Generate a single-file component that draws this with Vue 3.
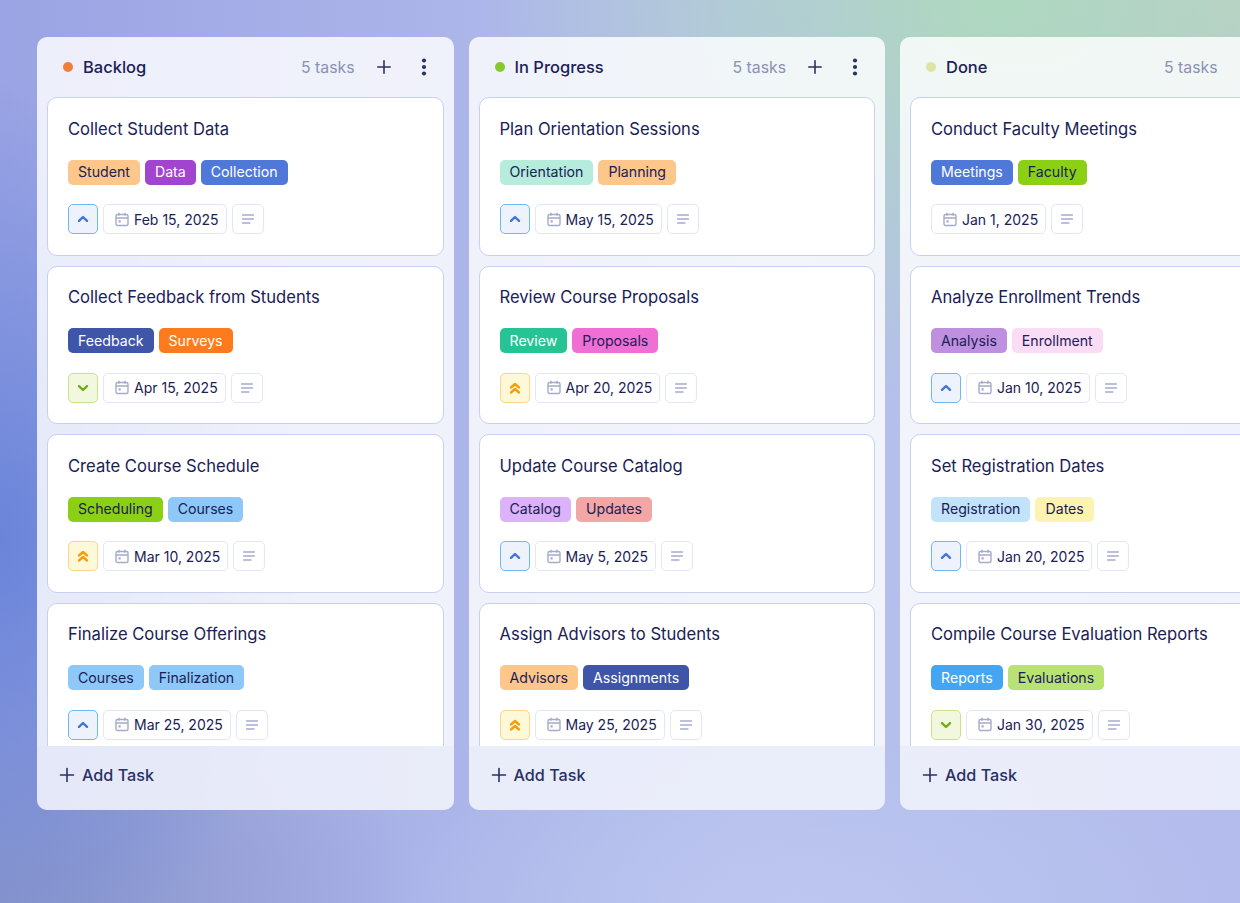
<script setup>
const columns = [
  {
    name: 'Backlog',
    dot: '#f08039',
    cards: [
      { title: 'Collect Student Data', tags: [['Student', 'orange'], ['Data', 'purple'], ['Collection', 'blue']], priority: 'medium', date: 'Feb 15, 2025' },
      { title: 'Collect Feedback from Students', tags: [['Feedback', 'navy'], ['Surveys', 'tangerine']], priority: 'low', date: 'Apr 15, 2025' },
      { title: 'Create Course Schedule', tags: [['Scheduling', 'green'], ['Courses', 'sky']], priority: 'high', date: 'Mar 10, 2025' },
      { title: 'Finalize Course Offerings', tags: [['Courses', 'sky'], ['Finalization', 'sky']], priority: 'medium', date: 'Mar 25, 2025' }
    ]
  },
  {
    name: 'In Progress',
    dot: '#86c92a',
    cards: [
      { title: 'Plan Orientation Sessions', tags: [['Orientation', 'mint'], ['Planning', 'orange']], priority: 'medium', date: 'May 15, 2025' },
      { title: 'Review Course Proposals', tags: [['Review', 'teal'], ['Proposals', 'pink']], priority: 'high', date: 'Apr 20, 2025' },
      { title: 'Update Course Catalog', tags: [['Catalog', 'lilac'], ['Updates', 'rose']], priority: 'medium', date: 'May 5, 2025' },
      { title: 'Assign Advisors to Students', tags: [['Advisors', 'orange'], ['Assignments', 'navy']], priority: 'high', date: 'May 25, 2025' }
    ]
  },
  {
    name: 'Done',
    dot: '#dfe3a6',
    cards: [
      { title: 'Conduct Faculty Meetings', tags: [['Meetings', 'blue'], ['Faculty', 'green']], priority: null, date: 'Jan 1, 2025' },
      { title: 'Analyze Enrollment Trends', tags: [['Analysis', 'violet'], ['Enrollment', 'blush']], priority: 'medium', date: 'Jan 10, 2025' },
      { title: 'Set Registration Dates', tags: [['Registration', 'ice'], ['Dates', 'cream']], priority: 'medium', date: 'Jan 20, 2025' },
      { title: 'Compile Course Evaluation Reports', tags: [['Reports', 'azure'], ['Evaluations', 'lime']], priority: 'low', date: 'Jan 30, 2025' }
    ]
  }
]
</script>

<template>
  <div class="board">
    <section v-for="col in columns" :key="col.name" class="column">
      <header class="col-head">
        <span class="dot" :style="{ background: col.dot }"></span>
        <h2>{{ col.name }}</h2>
        <span class="count">5 tasks</span>
        <svg class="head-icon plus" width="14" height="14" viewBox="0 0 14 14">
          <path d="M7 .8v12.400M.8 7h12.400" />
        </svg>
        <svg class="head-icon more" width="6" height="18" viewBox="0 0 6 18">
          <circle cx="3" cy="2.500" r="2.100" />
          <circle cx="3" cy="9" r="2.100" />
          <circle cx="3" cy="15.500" r="2.100" />
        </svg>
      </header>

      <div class="card-list">
        <article v-for="card in col.cards" :key="card.title" class="card">
          <h3>{{ card.title }}</h3>
          <div class="tags">
            <span v-for="tag in card.tags" :key="tag[0]" class="tag" :class="tag[1]">{{ tag[0] }}</span>
          </div>
          <div class="meta">
            <span v-if="card.priority" class="priority" :class="card.priority">
              <svg width="14" height="14" viewBox="0 0 14 14">
                <path v-if="card.priority === 'medium'" d="M3 8.800 7 5l4 3.800" />
                <path v-else-if="card.priority === 'low'" d="M3 5.200 7 9l4-3.800" />
                <path v-else d="M3 6.500 7 3l4 3.500M3 11.500 7 8l4 3.500" />
              </svg>
            </span>
            <span class="date">
              <svg width="14" height="15" viewBox="0 0 14 15">
                <rect x="1" y="2.500" width="12" height="11" rx="1.500" />
                <path d="M1 6h12M4 .8v3M10 .8v3" />
                <rect class="fill" x="3.500" y="8.300" width="2.200" height="2.200" />
              </svg>
              {{ card.date }}
            </span>
            <span class="notes">
              <svg width="14" height="12" viewBox="0 0 14 12">
                <path d="M1.500 2h11M1.500 6h11M1.500 10h7.500" />
              </svg>
            </span>
          </div>
        </article>
      </div>

      <footer class="col-foot">
        <svg width="16" height="16" viewBox="0 0 16 16">
          <path d="M8 1.500v13M1.500 8h13" />
        </svg>
        Add Task
      </footer>
    </section>
  </div>
</template>

<style scoped>
.board {
  width: 1240px;
  height: 903px;
  box-sizing: border-box;
  padding: 37px 0 0 37px;
  display: flex;
  gap: 15px;
  overflow: hidden;
  font-family: Inter, "Liberation Sans", sans-serif;
  color: #1a2157;
  background:
    radial-gradient(520px 420px at 1000px 0px, #aed8bf 0%, rgba(174, 216, 191, 0) 100%),
    radial-gradient(300px 460px at 0px 540px, #6a84d9 0%, rgba(106, 132, 217, 0) 100%),
    radial-gradient(420px 300px at 0px 903px, #8a96c8 0%, rgba(138, 150, 200, 0) 100%),
    radial-gradient(400px 200px at 1240px 0px, #c2cdc8 0%, rgba(194, 205, 200, 0) 100%),
    radial-gradient(420px 160px at 800px 903px, #bcc6f0 0%, rgba(188, 198, 240, 0) 100%),
    linear-gradient(90deg, #9ba4e4 0%, #b6c0ec 60%, #b3bcec 100%);
}

.column {
  flex: 0 0 416.500px;
  height: 773px;
  display: flex;
  flex-direction: column;
  border-radius: 10px;
  overflow: hidden;
  background: rgba(255, 255, 255, 0.82);
}

.col-head {
  flex: 0 0 60px;
  box-sizing: border-box;
  display: flex;
  align-items: center;
  padding: 0 27px 0 26px;
}

.dot {
  width: 10px;
  height: 10px;
  border-radius: 50%;
  margin-right: 10px;
}

h2 {
  margin: 0;
  flex: 1;
  font-size: 16.500px;
  font-weight: 550;
}

.count {
  font-size: 15.800px;
  color: #8b92b5;
  margin-right: 22px;
}

.head-icon.plus {
  margin-right: 30px;
}

.head-icon.plus path {
  stroke: #2a3163;
  stroke-width: 1.600;
  stroke-linecap: round;
  fill: none;
}

.head-icon.more circle {
  fill: #2a3163;
}

.card-list {
  flex: 1;
  min-height: 0;
  overflow: hidden;
  display: flex;
  flex-direction: column;
  gap: 10px;
  padding: 0 10px;
}

.card {
  flex: 0 0 158.500px;
  box-sizing: border-box;
  background: #fff;
  border: 1px solid #c8cff0;
  border-radius: 10px;
  padding: 19.900px 20px 0;
}

h3 {
  margin: 0 0 20px;
  font-size: 16.600px;
  line-height: 22px;
  font-weight: 400;
}

.tags {
  display: flex;
  gap: 5px;
  margin-bottom: 19.200px;
}

.tag {
  height: 25px;
  box-sizing: border-box;
  display: flex;
  align-items: center;
  padding: 0 10px 1px;
  border-radius: 5px;
  font-size: 14.150px;
  color: #1a2157;
}

.orange { background: #fdc68a; }
.purple { background: #a144d0; color: #fff; }
.blue { background: #4f78d9; color: #fff; }
.navy { background: #3e55a8; color: #fff; }
.tangerine { background: #fd7b1c; color: #fff; }
.green { background: #8bd014; }
.sky { background: #8ec8f8; }
.mint { background: #b5ecdc; }
.teal { background: #26c495; color: #fff; }
.pink { background: #f06fd5; }
.lilac { background: #dcb2f8; }
.rose { background: #f2a6a6; }
.violet { background: #bf90e0; }
.blush { background: #fbdcf6; }
.ice { background: #c3e3fb; }
.cream { background: #fdf3b0; }
.azure { background: #44a6f2; color: #fff; }
.lime { background: #b8e274; }

.meta {
  display: flex;
  gap: 5px;
}

.priority,
.date,
.notes {
  height: 30px;
  box-sizing: border-box;
  display: flex;
  align-items: center;
  justify-content: center;
  border-radius: 5px;
  border: 1px solid #e2e6f8;
}

.priority {
  width: 30px;
}

.priority path {
  fill: none;
  stroke-width: 2.400;
  stroke-linecap: round;
  stroke-linejoin: round;
}

.medium {
  background: #eef2fc;
  border-color: #6db8f5;
}

.medium path {
  stroke: #3f74d8;
}

.low {
  background: #f1f8dd;
  border-color: #c5e58a;
}

.low path {
  stroke: #6fae12;
}

.high {
  background: #fdf8d8;
  border-color: #fbd68e;
}

.high path {
  stroke: #f59e0b;
}

.date {
  padding: 0 7px 0 11px;
  gap: 5px;
  font-size: 14px;
  color: #1a2157;
  white-space: nowrap;
}

.date svg rect,
.date svg path {
  fill: none;
  stroke: #a5abc9;
  stroke-width: 1.400;
}

.date svg .fill {
  fill: #a5abc9;
  stroke: none;
}

.notes {
  width: 32px;
}

.notes path {
  fill: none;
  stroke: #a5abd0;
  stroke-width: 1.300;
  stroke-linecap: round;
}

.col-foot {
  flex: 0 0 64px;
  box-sizing: border-box;
  display: flex;
  align-items: center;
  gap: 7px;
  padding: 0 0 6px 22px;
  font-size: 16.200px;
  font-weight: 500;
  color: #2a3163;
  background: rgba(225, 229, 247, 0.5);
}

.col-foot path {
  fill: none;
  stroke: #2a3163;
  stroke-width: 1.600;
  stroke-linecap: round;
}
</style>
